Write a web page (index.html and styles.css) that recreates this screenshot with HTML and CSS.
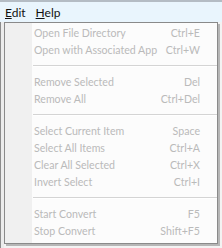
FILE: index.html
```html
<!DOCTYPE html>
<html lang="en">
  <head>
    <meta charset="UTF-8" />
    <title>Edit menu</title>
    <link rel="stylesheet" href="styles.css">
  </head>
  <body>
    <div class="menubar">
      <span class="menu-title"><u>E</u>dit</span>
      <span class="menu-title"><u>H</u>elp</span>
    </div>

    <div class="stage">
      <div class="dropdown">
        <div class="item"><span>Open File Directory</span><span>Ctrl+E</span></div>
        <div class="item"><span>Open with Associated App</span><span>Ctrl+W</span></div>
        <div class="sep"></div>
        <div class="item"><span>Remove Selected</span><span>Del</span></div>
        <div class="item"><span>Remove All</span><span>Ctrl+Del</span></div>
        <div class="sep"></div>
        <div class="item"><span>Select Current Item</span><span>Space</span></div>
        <div class="item"><span>Select All Items</span><span>Ctrl+A</span></div>
        <div class="item"><span>Clear All Selected</span><span>Ctrl+X</span></div>
        <div class="item"><span>Invert Select</span><span>Ctrl+I</span></div>
        <div class="sep"></div>
        <div class="item"><span>Start Convert</span><span>F5</span></div>
        <div class="item"><span>Stop Convert</span><span>Shift+F5</span></div>
      </div>
    </div>
  </body>
</html>
```

FILE: styles.css
```css
body {
  margin: 0;
  width: 222px;
  height: 248px;
  overflow: hidden;
  background: #c9c9c9;
  font-family: 'Lato', sans-serif;
  font-size: 10.6px;
}

.menubar {
  height: 20px;
  border-top: 2px solid #b4bcc4;
  background: #e9f5fd;
  display: flex;
  align-items: center;
  padding-left: 5px;
  gap: 10px;
  color: #111;
  font-size: 12px;
}

.stage {
  display: flex;
  background: linear-gradient(90deg, #8c8c8c 0, #8c8c8c 1px, #ececec 1px, #ececec 4px, #f3f3f3 4px);
  height: 226px;
}

.dropdown {
  margin-left: 4px;
  width: 214px;
  height: 222px;
  padding: 1px 0 3px;
  box-sizing: border-box;
  border: 1px solid #8a8a8a;
  background: linear-gradient(90deg, #f0f0f0 0, #f0f0f0 27px, #fcfcfc 27px);
  box-shadow: 2px 2px 0 rgba(0, 0, 0, 0.25);
  color: #bababa;
}

.item {
  height: 17px;
  display: flex;
  align-items: center;
  justify-content: space-between;
  white-space: nowrap;
  padding: 0 17px 0 29px;
}

.sep {
  height: 15px;
  margin-left: 28px;
  display: flex;
  align-items: center;
}

.sep::after {
  content: "";
  flex: 1;
  height: 1px;
  background: #d4d4d4;
  border-bottom: 1px solid #ffffff;
}
```
